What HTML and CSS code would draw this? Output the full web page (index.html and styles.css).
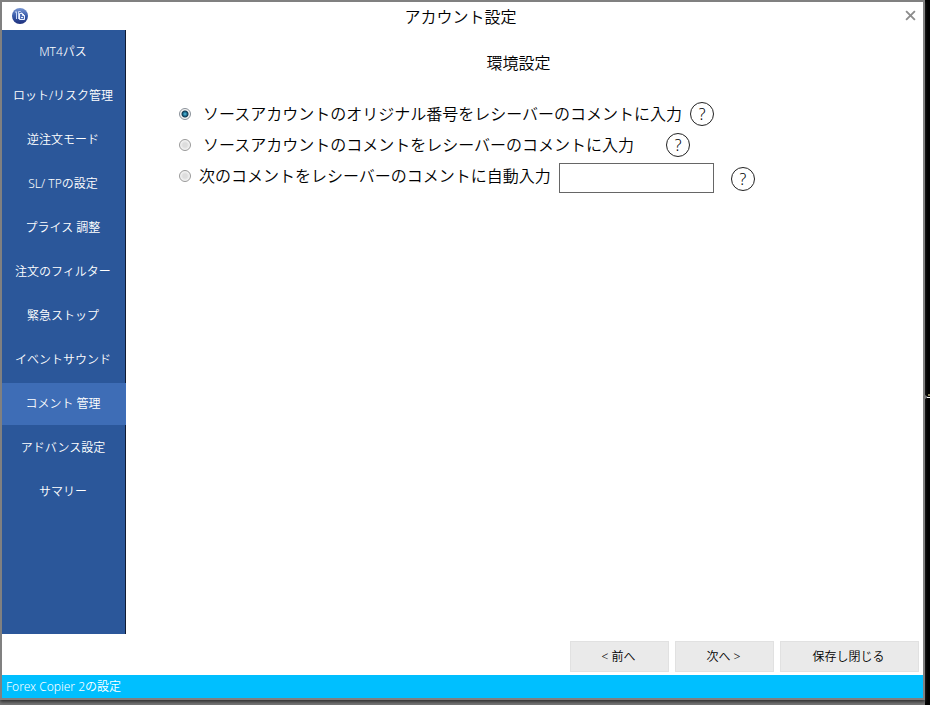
FILE: index.html
```html
<!DOCTYPE html>
<html lang="ja">
<head>
    <meta charset="UTF-8">
    <meta name="viewport" content="width=device-width, initial-scale=1.0">
    <title>アカウント設定</title>
    <link rel="stylesheet" href="styles.css">
</head>
<body>
    <div class="window">
        <header class="titlebar">
            <svg class="logo" viewBox="0 0 16 16" aria-hidden="true">
                <defs>
                    <linearGradient id="ball" x1="0" y1="0" x2="0" y2="1">
                        <stop offset="0" stop-color="#7795d2"/>
                        <stop offset="0.5" stop-color="#395ba9"/>
                        <stop offset="1" stop-color="#1d2f7c"/>
                    </linearGradient>
                </defs>
                <circle cx="8" cy="8" r="8" fill="url(#ball)"/>
                <path d="M3 4h2M4.500 4v7M6.500 11V3.500h2l1 1" fill="none" stroke="#c6d5f3"/>
                <path d="M7.500 5.500h3l2 2v4h-5z" fill="#5271b8" stroke="#eef3ff"/>
                <path d="M10.500 5.500v2h2M9 9.500h2" fill="none" stroke="#eef3ff"/>
            </svg>
            <h1>アカウント設定</h1>
            <button type="button" class="close" aria-label="閉じる">
                <svg viewBox="0 0 10 10"><path d="M1 1l8 8M9 1l-8 8" fill="none" stroke="#8c8c8c" stroke-width="1.700"/></svg>
            </button>
        </header>

        <div class="body">
            <nav class="sidebar">
                <a href="#">MT4パス</a>
                <a href="#">ロット/リスク管理</a>
                <a href="#">逆注文モード</a>
                <a href="#">SL/ TPの設定</a>
                <a href="#">プライス 調整</a>
                <a href="#">注文のフィルター</a>
                <a href="#">緊急ストップ</a>
                <a href="#">イベントサウンド</a>
                <a href="#" class="active">コメント 管理</a>
                <a href="#">アドバンス設定</a>
                <a href="#">サマリー</a>
            </nav>

            <main class="content">
                <h2>環境設定</h2>
                <form class="options">
                    <div class="option">
                        <input type="radio" name="comment" id="original" checked>
                        <label for="original">ソースアカウントのオリジナル番号をレシーバーのコメントに入力</label>
                        <button type="button" class="help">?</button>
                    </div>
                    <div class="option spaced">
                        <input type="radio" name="comment" id="source">
                        <label for="source">ソースアカウントのコメントをレシーバーのコメントに入力</label>
                        <button type="button" class="help">?</button>
                    </div>
                    <div class="option custom">
                        <input type="radio" name="comment" id="custom">
                        <label for="custom" id="custom-label">次のコメントをレシーバーのコメントに自動入力</label>
                        <input type="text" class="comment-text" aria-labelledby="custom-label">
                        <button type="button" class="help">?</button>
                    </div>
                </form>
            </main>
        </div>

        <div class="actions">
            <button type="button">&lt; 前へ</button>
            <button type="button">次へ &gt;</button>
            <button type="button" class="save">保存し閉じる</button>
        </div>

        <footer class="statusbar">Forex Copier 2の設定</footer>
    </div>
    <svg class="cursor" viewBox="0 0 7 8" aria-hidden="true">
        <path d="M0 3l2-1 3 2-3 2H0z" fill="#777"/>
        <path d="M4 4h3v1H4z" fill="#fff"/>
        <path d="M5 1h2v2H5z" fill="#8a8560"/>
    </svg>
</body>
</html>
```

FILE: styles.css
```css
* {
    box-sizing: border-box;
}
body {
    display: flex;
    min-height: 100vh;
    margin: 0;
    padding: 0 5px 5px 0;
    background: linear-gradient(#000, #000) right / 5px 100% no-repeat #777;
    color: #000;
    font-family: "Noto Sans", "Noto Sans CJK JP", sans-serif;
    font-size: 16px;
    font-weight: 350;
}
button, input {
    font: inherit;
    color: inherit;
    margin: 0;
}
h1, h2 {
    margin: 0;
    font-size: 16px;
    font-weight: 350;
    line-height: 24px;
    text-align: center;
}
.window {
    display: flex;
    flex-direction: column;
    flex: 1;
    border: 2px solid #808080;
    background: #fff;
    box-shadow: 0 2px 3px #333;
}

/* title bar */
.titlebar {
    display: flex;
    align-items: center;
    height: 28px;
    padding: 0 7px 0 10px;
}
.titlebar h1 {
    flex: 1;
    padding: 1px 12px 0 0;
}
.logo {
    width: 16px;
    height: 16px;
}
.close {
    display: flex;
    padding: 0 0 2px;
    border: 0;
    background: none;
}
.close svg {
    width: 11px;
    height: 11px;
}

/* side menu */
.body {
    display: flex;
    flex: 1;
}
.sidebar {
    width: 124px;
    background: linear-gradient(#111c33, #111c33) right / 1px 100% no-repeat #2b579a;
    font-size: 12px;
}
.sidebar a {
    display: block;
    height: 42px;
    margin: 1px 0 2px;
    padding-right: 2px;
    line-height: 42px;
    color: #fff;
    text-align: center;
    text-decoration: none;
    white-space: nowrap;
}
.sidebar .active {
    background: #3e6db6;
}

/* options */
.content {
    flex: 1;
    padding: 21px 12px 0 0;
}
.options {
    padding: 23px 0 0 53px;
}
.option {
    display: flex;
    align-items: center;
    height: 31px;
    line-height: 24px;
    white-space: nowrap;
}
.option label {
    margin: 0 8px 0 12px;
}
.option input[type="radio"] {
    appearance: none;
    width: 12px;
    height: 12px;
    border: 1px solid #999;
    border-radius: 50%;
    background: radial-gradient(#ddd 30%, #f4f4f4 65%);
}
.option input[type="radio"]:checked {
    border-color: #8a9199;
    background: radial-gradient(circle at 5px 5px, #5cc5e2 0, #17668a 2px, #14384e 3px, #f4f4f4 4px);
}
.spaced label {
    margin-right: 32px;
}
.custom label {
    margin-left: 8px;
}
.comment-text {
    width: 155px;
    height: 30px;
    margin: 4px 17px 0 0;
    padding: 4px;
    border: 1px solid #666;
    background: #fff;
}
.help {
    width: 24px;
    height: 24px;
    padding: 0;
    border: 1px solid #222;
    border-radius: 50%;
    background: #fff;
    line-height: 22px;
    text-align: center;
}
.custom .help {
    margin-top: 7px;
}

/* bottom */
.actions {
    display: flex;
    justify-content: flex-end;
    gap: 6px;
    padding: 7px 4px 3px;
}
.actions button {
    width: 99px;
    height: 31px;
    padding: 0 2px 2px 0;
    border: 1px solid #e1e1e1;
    background: #eaeaea;
    font-size: 12px;
}
.actions .save {
    width: 139px;
}
.statusbar {
    height: 23px;
    padding: 0 4px;
    background: #00bfff;
    color: #fff;
    font-size: 12px;
    line-height: 23px;
}
.cursor {
    position: absolute;
    top: 393px;
    right: 0;
    width: 7px;
    height: 8px;
}
```
